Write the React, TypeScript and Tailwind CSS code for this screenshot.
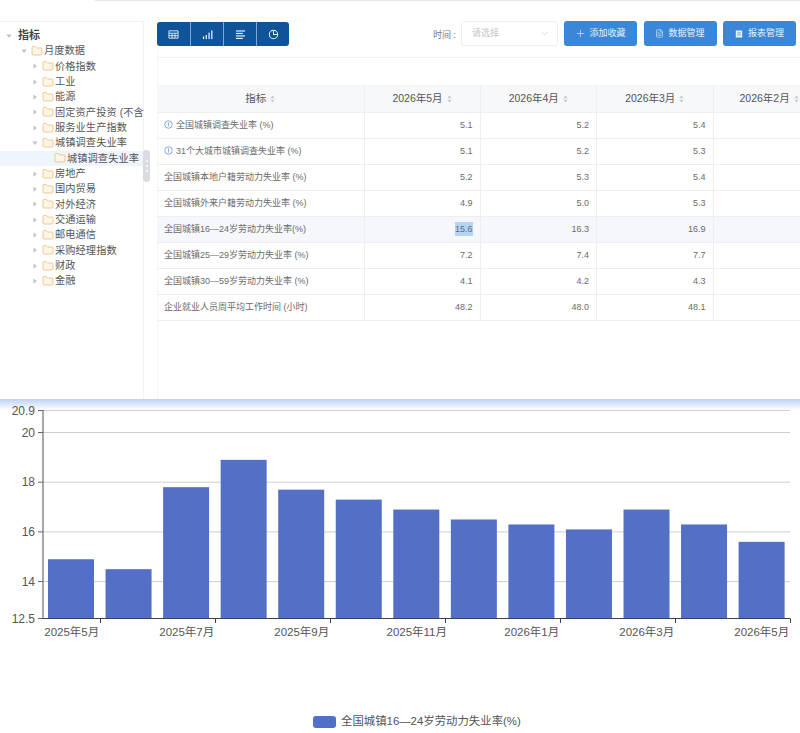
import { ChevronDown, FileText, Folder, Plus } from "lucide-react";

const font = { fontFamily: '"Liberation Sans", "Noto Sans CJK SC", sans-serif' };

type TreeItem = { label: string; level: number; caret?: "open" | "closed"; folder?: boolean; selected?: boolean; root?: boolean };

const tree: TreeItem[] = [
  { label: "指标", level: 0, caret: "open", root: true },
  { label: "月度数据", level: 1, caret: "open", folder: true },
  { label: "价格指数", level: 2, caret: "closed", folder: true },
  { label: "工业", level: 2, caret: "closed", folder: true },
  { label: "能源", level: 2, caret: "closed", folder: true },
  { label: "固定资产投资 (不含", level: 2, caret: "closed", folder: true },
  { label: "服务业生产指数", level: 2, caret: "closed", folder: true },
  { label: "城镇调查失业率", level: 2, caret: "open", folder: true },
  { label: "城镇调查失业率", level: 3, folder: true, selected: true },
  { label: "房地产", level: 2, caret: "closed", folder: true },
  { label: "国内贸易", level: 2, caret: "closed", folder: true },
  { label: "对外经济", level: 2, caret: "closed", folder: true },
  { label: "交通运输", level: 2, caret: "closed", folder: true },
  { label: "邮电通信", level: 2, caret: "closed", folder: true },
  { label: "采购经理指数", level: 2, caret: "closed", folder: true },
  { label: "财政", level: 2, caret: "closed", folder: true },
  { label: "金融", level: 2, caret: "closed", folder: true },
];

const indent = ["pl-[6px]", "pl-[21px]", "pl-[32px]", "pl-[44px]"];

const rows = [
  { name: "全国城镇调查失业率 (%)", info: true, v: ["5.1", "5.2", "5.4"] },
  { name: "31个大城市城镇调查失业率 (%)", info: true, v: ["5.1", "5.2", "5.3"] },
  { name: "全国城镇本地户籍劳动力失业率 (%)", v: ["5.2", "5.3", "5.4"] },
  { name: "全国城镇外来户籍劳动力失业率 (%)", v: ["4.9", "5.0", "5.3"] },
  { name: "全国城镇16—24岁劳动力失业率(%)", v: ["15.6", "16.3", "16.9"], hover: true },
  { name: "全国城镇25—29岁劳动力失业率 (%)", v: ["7.2", "7.4", "7.7"] },
  { name: "全国城镇30—59岁劳动力失业率 (%)", v: ["4.1", "4.2", "4.3"] },
  { name: "企业就业人员周平均工作时间 (小时)", v: ["48.2", "48.0", "48.1"] },
];

const values = [14.9, 14.5, 17.8, 18.9, 17.7, 17.3, 16.9, 16.5, 16.3, 16.1, 16.9, 16.3, 15.6];
const xLabels = ["2025年5月", "2025年7月", "2025年9月", "2025年11月", "2026年1月", "2026年3月", "2026年5月"];
const yTicks = [20.9, 20, 18, 16, 14, 12.5];

const axisLeft = 43;
const axisBottom = 618.5;
const slot = 57.5;
const yOf = (v: number) => 432.5 + (20 - v) * 24.85;

function SortIcon() {
  return (
    <svg viewBox="0 0 6 10" className="w-[5px] h-[8px] inline-block ml-[4px] align-[-1px]" fill="#c4c9d0">
      <path d="M3 0.5 L5.6 4 H0.4 Z" />
      <path d="M3 9.5 L0.4 6 H5.6 Z" />
    </svg>
  );
}

function Caret({ dir }: { dir?: "open" | "closed" }) {
  if (!dir) return <span className="w-[10px] shrink-0" />;
  return (
    <svg viewBox="0 0 8 8" className="w-[6px] h-[6px] mr-[4px] shrink-0" fill="#c2c2c2">
      {dir === "open" ? <path d="M0.5 2 H7.5 L4 6.5 Z" /> : <path d="M2 0.5 L6.5 4 L2 7.5 Z" />}
    </svg>
  );
}

function InfoDot() {
  return (
    <svg viewBox="0 0 12 12" className="w-[9px] h-[9px] mr-[3px] inline-block align-[-1px]" fill="none" stroke="#5b93c9" strokeWidth="1">
      <circle cx="6" cy="6" r="5" />
      <path d="M5 4.2 L6.2 3.6 V8.6" />
    </svg>
  );
}

function ToolButton({ icon, label }: { icon: React.ReactNode; label: string }) {
  return (
    <button className="w-[73px] h-[25px] rounded-[3px] bg-[#3a87d9] text-[#e6f0fb] text-[9px] flex items-center justify-center gap-[3px]">
      {icon}
      {label}
    </button>
  );
}

const viewIcons = [
  <svg key="table" viewBox="0 0 12 12" className="w-[11px] h-[11px]" fill="none" stroke="#e3edf7" strokeWidth="1">
    <path d="M1 2 H11 V10 H1 Z M1 4.6 H11 M1 7.3 H11 M4.4 4.6 V10 M7.7 4.6 V10" />
  </svg>,
  <svg key="bars" viewBox="0 0 12 12" className="w-[11px] h-[11px]" fill="#e3edf7">
    <rect x="1" y="8" width="1.4" height="3" />
    <rect x="4" y="6.5" width="1.4" height="4.5" />
    <rect x="7" y="4" width="1.4" height="7" />
    <rect x="10" y="1.5" width="1.4" height="9.5" />
  </svg>,
  <svg key="lines" viewBox="0 0 12 12" className="w-[11px] h-[11px]" fill="#e3edf7">
    <rect x="1" y="1.5" width="10" height="1.3" />
    <rect x="1" y="4.2" width="7.5" height="1.3" />
    <rect x="1" y="6.9" width="10" height="1.3" />
    <rect x="1" y="9.6" width="7.5" height="1.3" />
  </svg>,
  <svg key="pie" viewBox="0 0 12 12" className="w-[11px] h-[11px]" fill="none" stroke="#e3edf7" strokeWidth="1.1">
    <circle cx="6" cy="6" r="4.6" />
    <path d="M6 1.4 V6 H10.6" />
  </svg>,
];

export default function App() {
  return (
    <div className="w-[800px] h-[733px] overflow-hidden bg-white" style={font}>
      <div className="h-[399px] flex flex-col">
        <div className="h-[21px] shrink-0">
          <div className="ml-[95px] h-px bg-[#e3e5ee]" />
        </div>
        <div className="flex-1 flex min-h-0">
          <aside className="relative w-[144px] shrink-0 border-t border-r border-[#f2f2f2] pt-[6px]">
            {tree.map((t, i) => (
              <div
                key={i}
                className={`h-[15.33px] flex items-center whitespace-nowrap ${indent[t.level]} ${t.selected ? "bg-[#eef5fd]" : ""}`}
              >
                <Caret dir={t.caret} />
                {t.folder && <Folder className="w-[12px] h-[12px] mr-[1px] shrink-0 text-[#e9bd74] fill-[#fdf6e6]" strokeWidth={1.6} />}
                <span className={t.root ? "text-[11px] font-bold text-[#444] ml-[2px]" : "text-[10.2px] tracking-[0.1px] text-[#555]"}>{t.label}</span>
              </div>
            ))}
            <div className="absolute left-[143px] top-[128px] w-[7px] h-[32px] rounded-[3px] bg-[#d9dce0] flex flex-col items-center justify-center gap-[3px]">
              <span className="w-[2px] h-[2px] rounded-full bg-white" />
              <span className="w-[2px] h-[2px] rounded-full bg-white" />
              <span className="w-[2px] h-[2px] rounded-full bg-white" />
            </div>
          </aside>

          <main className="flex-1 ml-[13px] min-w-0 overflow-hidden shadow-[inset_1px_0_0_#f6f6f6]">
            <div className="flex items-start border-b border-[#f2f2f2] h-[37px]">
              <div className="flex rounded-[3px] overflow-hidden mt-px">
                {viewIcons.map((icon, i) => (
                  <div key={i} className={`w-[33px] h-[24px] bg-[#0f5499] flex items-center justify-center ${i > 0 ? "border-l border-[#7ea6cf]" : ""}`}>
                    {icon}
                  </div>
                ))}
              </div>
              <span className="ml-auto mt-[8px] text-[9px] text-[#777]">时间 :</span>
              <div className="ml-[5px] w-[97px] h-[25px] border border-[#eceef1] rounded-[3px] flex items-center justify-between pl-[10px] pr-[8px]">
                <span className="text-[9px] text-[#c4c4c4]">请选择</span>
                <ChevronDown className="w-[9px] h-[9px] text-[#c9c9c9]" />
              </div>
              <div className="ml-[6px] mr-[4px] flex gap-[6.5px]">
                <ToolButton icon={<Plus className="w-[11px] h-[11px]" strokeWidth={1.4} />} label="添加收藏" />
                <ToolButton icon={<FileText className="w-[9px] h-[9px] mr-[1px]" strokeWidth={1.6} />} label="数据管理" />
                <ToolButton
                  icon={
                    <svg viewBox="0 0 10 10" className="w-[8px] h-[8px] mr-[2px]" fill="#e6f0fb">
                      <path d="M1 0.5 H9 V9.5 H1 Z M3 3 V4 H7 V3 Z M3 5.5 V6.5 H7 V5.5 Z" fillRule="evenodd" />
                    </svg>
                  }
                  label="报表管理"
                />
              </div>
            </div>

            <table className="mt-[27px] table-fixed border-collapse w-[740px] text-[9px] text-[#6b6b6b]">
              <colgroup>
                <col className="w-[207px]" />
                <col className="w-[116px]" />
                <col className="w-[116.5px]" />
                <col className="w-[116.5px]" />
                <col className="w-[184px]" />
              </colgroup>
              <thead>
                <tr className="h-[27px] bg-[#f7f8fa] text-[10.5px] font-normal text-[#555]">
                  {["指标", "2026年5月", "2026年4月", "2026年3月", "2026年2月"].map((h, i) => (
                    <th key={h} className={`font-normal border border-[#eceef1] border-l-0 border-t-[#f2f3f5] whitespace-nowrap ${i === 4 ? "text-left pl-[26px]" : "text-center"}`}>
                      {h}
                      <SortIcon />
                    </th>
                  ))}
                </tr>
              </thead>
              <tbody>
                {rows.map((r) => (
                  <tr key={r.name} className={`h-[26px] ${r.hover ? "bg-[#f5f7fa]" : ""}`}>
                    <td className="pl-[7px] border-b border-r border-[#eceef1] whitespace-nowrap">
                      {r.info && <InfoDot />}
                      {r.name}
                    </td>
                    {r.v.map((n, i) => (
                      <td key={i} className="text-right pr-[7px] border-b border-r border-[#eceef1]">
                        <span className={r.hover && i === 0 ? "bg-[#b4d3f5] py-[2px]" : ""}>{n}</span>
                      </td>
                    ))}
                    <td className="border-b border-[#eceef1]" />
                  </tr>
                ))}
              </tbody>
            </table>
          </main>
        </div>
      </div>

      <section className="h-[334px] bg-linear-to-b from-[#bed1f6] to-white to-[11px]">
        <svg viewBox="0 399 800 240" width={800} height={240} className="block">
          {yTicks.slice(0, 5).map((t) => {
            const y = t === 20.9 ? 410.5 : yOf(t);
            return <line key={t} x1={axisLeft} x2={790} y1={y} y2={y} stroke="#cfcfd2" strokeWidth={1} />;
          })}
          {values.map((v, i) => (
            <rect key={i} x={48 + i * 57.55} y={yOf(v)} width={46} height={axisBottom - yOf(v)} fill="#5470c6" />
          ))}
          <line x1={axisLeft} x2={axisLeft} y1={410} y2={axisBottom} stroke="#8a8a8a" strokeWidth={1.5} />
          {yTicks.map((t) => {
            const y = t === 20.9 ? 410.5 : t === 12.5 ? axisBottom : yOf(t);
            return (
              <g key={t}>
                <line x1={38} x2={axisLeft} y1={y} y2={y} stroke="#666" strokeWidth={1} />
                <text x={35} y={y + 4} textAnchor="end" fontSize={12} fill="#555">
                  {t}
                </text>
              </g>
            );
          })}
          <line x1={axisLeft} x2={790} y1={axisBottom} y2={axisBottom} stroke="#3a3f55" strokeWidth={1} />
          {xLabels.map((l, i) => {
            const x = axisLeft + slot * (2 * i + 0.5);
            return (
              <text key={l} x={x} y={636} textAnchor="middle" fontSize={11.5} fill="#555">
                {l}
              </text>
            );
          })}
          {values.map((_, i) => {
            const x = axisLeft + slot * (i + 1);
            return i % 2 === 0 ? <line key={i} x1={x} x2={x} y1={axisBottom} y2={623} stroke="#3a3f55" strokeWidth={1} /> : null;
          })}
        </svg>
        <div className="mt-[74px] ml-[313px] flex items-center">
          <span className="w-[23px] h-[12px] rounded-[3px] bg-[#4f6fc9]" />
          <span className="ml-[5px] text-[11.4px] text-[#555] whitespace-nowrap">全国城镇16—24岁劳动力失业率(%)</span>
        </div>
      </section>
    </div>
  );
}
